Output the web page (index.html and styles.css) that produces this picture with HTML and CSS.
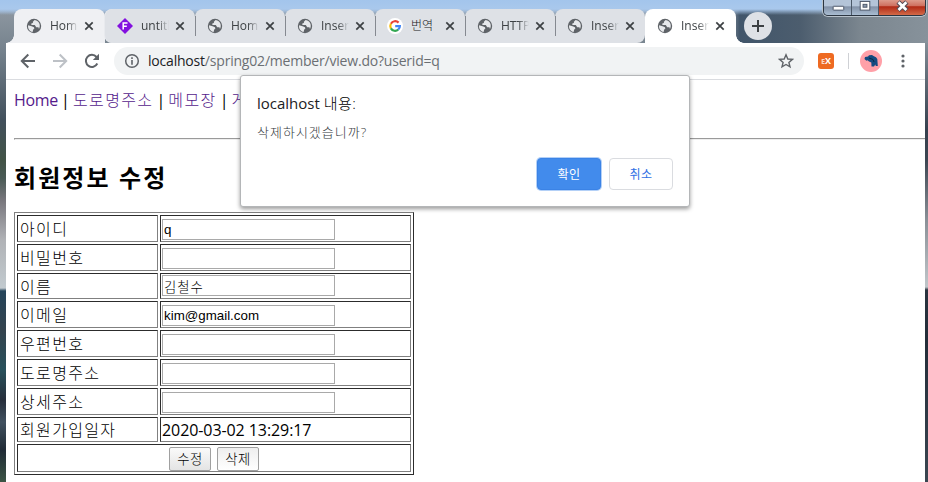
FILE: index.html
```html
<!DOCTYPE html>
<html lang="ko">
<head>
<meta charset="utf-8">
<title>회원정보 수정</title>
<link rel="stylesheet" href="styles.css">
</head>
<body>
<svg width="0" height="0" class="defs">
  <symbol id="globe" viewBox="0 0 16 16">
    <circle cx="8" cy="8" r="7.2" fill="#5f6368"/>
    <path d="M2.100 7.200 5.600 8.200 8 9.300 8.300 10.700 7.200 11.600 6.600 13.900C3.600 13.500 1.600 10.800 2.100 7.200ZM8.600 2.100 6.900 3.700 6.900 4.900 5.300 5.600 5.400 7 8.800 7.100 10.200 9.200 12.400 9.300 13 11C14.900 7.500 13.500 2.800 8.600 2.100Z" fill="#e6e8eb"/>
  </symbol>
  <symbol id="close" viewBox="0 0 10 10"><path d="M1.300 1.300 8.700 8.700M8.700 1.300 1.300 8.700" stroke="#3c4043" stroke-width="1.700"/></symbol>
</svg>
<div class="desktop">
  <header class="tabs">
    <div class="tab hover"><svg class="fav"><use href="#globe"/></svg><span>Home</span><svg class="x"><use href="#close"/></svg></div>
    <div class="tab after"><svg class="fav" viewBox="0 0 16 16"><path d="M8 0 16 8 8 16 0 8Z" fill="#8310df"/><path d="M6.200 11.500V5H10.500M6.200 8.200H9.800" fill="none" stroke="#fff" stroke-width="1.500"/></svg><span>untitled</span><svg class="x"><use href="#close"/></svg></div>
    <div class="tab sep"><svg class="fav"><use href="#globe"/></svg><span>Home</span><svg class="x"><use href="#close"/></svg></div>
    <div class="tab sep"><svg class="fav"><use href="#globe"/></svg><span>Insert</span><svg class="x"><use href="#close"/></svg></div>
    <div class="tab sep"><svg class="fav" viewBox="0 0 16 16"><circle cx="8" cy="8" r="8" fill="#fff"/><g fill="none" stroke-width="2.200"><path d="M3.900 5.700A4.900 4.900 0 0 1 11.600 4.600" stroke="#ea4335"/><path d="M3.900 5.700A4.900 4.900 0 0 0 3.900 10.500" stroke="#fbbc05"/><path d="M3.900 10.400A4.900 4.900 0 0 0 11.200 11.700" stroke="#34a853"/><path d="M11.200 11.700A4.600 4.600 0 0 0 12.900 8.100H8.200" stroke="#4285f4"/></g></svg><span class="ko">번역</span><svg class="x"><use href="#close"/></svg></div>
    <div class="tab sep"><svg class="fav"><use href="#globe"/></svg><span>HTTP</span><svg class="x"><use href="#close"/></svg></div>
    <div class="tab sep last"><svg class="fav"><use href="#globe"/></svg><span>Insert</span><svg class="x"><use href="#close"/></svg></div>
    <div class="tab active"><svg class="fav"><use href="#globe"/></svg><span>Insert</span><svg class="x"><use href="#close"/></svg></div>
    <div class="newtab"><svg viewBox="0 0 28 28"><path d="M14 8V20M8 14H20" stroke="#3c4043" stroke-width="2"/></svg></div>
    <div class="controls">
      <i><svg viewBox="0 0 28 15"><rect x="9.500" y="6.500" width="11" height="4" rx=".5" fill="#fff" stroke="#4c5668"/></svg></i>
      <i><svg viewBox="0 0 27 15"><rect x="8.500" y="1.500" width="10" height="9" fill="#fff" stroke="#4c5668"/><rect x="11.500" y="4.500" width="4" height="3" fill="#8c9bb0" stroke="#4c5668"/></svg></i>
      <i class="red"><svg viewBox="0 0 47 15"><path d="M19.500 2 28.500 10.500M28.500 2 19.500 10.500" stroke="#544b55" stroke-width="5"/><path d="M20 2.300 28 10.200M28 2.300 20 10.200" stroke="#fff" stroke-width="2.800"/></svg></i>
    </div>
  </header>
  <div class="window">
    <div class="toolbar">
      <svg class="ic" viewBox="0 0 16 16"><path d="M15 8H2.500M8.300 1.500 1.800 8l6.500 6.500" fill="none" stroke="#5f6368" stroke-width="2"/></svg>
      <svg class="ic" viewBox="0 0 16 16"><path d="M1 8H13.500M7.700 1.500 14.200 8l-6.500 6.500" fill="none" stroke="#bdc1c6" stroke-width="2"/></svg>
      <svg class="ic" viewBox="0 0 16 16"><path d="M13.300 10.500A6 6 0 1 1 12.500 4L14 5.500" fill="none" stroke="#5f6368" stroke-width="2"/><path d="M15 .8V7H8.800Z" fill="#5f6368"/></svg>
      <div class="omnibox">
        <svg class="info" viewBox="0 0 16 16"><circle cx="8" cy="8" r="6.300" fill="none" stroke="#5f6368" stroke-width="1.500"/><path d="M8 4.300V5.900M8 7.100V11.700" stroke="#5f6368" stroke-width="1.600"/></svg>
        <span class="url"><b>localhost</b>/spring02/member/view.do?userid=q</span>
        <svg class="star" viewBox="0 0 16 16"><path d="M8 1.800 9.800 6 14.400 6.400 10.900 9.400 12 13.900 8 11.500 4 13.900 5.100 9.400 1.600 6.400 6.200 6Z" fill="none" stroke="#5f6368" stroke-width="1.400"/></svg>
      </div>
      <div class="ext"><small>E</small>X</div>
      <div class="bar"></div>
      <svg class="avatar" viewBox="0 0 22 22"><circle cx="11" cy="11" r="11" fill="#ffa0a8"/><path d="M4.500 9 5 7 8 6.500 9 5.200 12 5 13.500 6 16 7.200 17.300 9 17.800 16H15.800L15.300 14.500 14 16.500H11.500L11.300 12.500 9 11.500 7.500 10.300 6.500 10.800 5.500 10Z" fill="#134a80"/><path d="M9 8 13 9.500 14 12" fill="none" stroke="#082846"/></svg>
      <svg class="dots" viewBox="0 0 4 14"><g fill="#5f6368"><circle cx="2" cy="2" r="1.600"/><circle cx="2" cy="7" r="1.600"/><circle cx="2" cy="12" r="1.600"/></g></svg>
    </div>
    <main>
      <nav><a>Home</a><s>|</s><a class="k">도로명주소</a><s>|</s><a class="k">메모장</a><s>|</s><a class="k">게</a></nav>
      <hr>
      <h2>회원정보 수정</h2>
      <table>
        <colgroup><col class="c1"><col class="c2"></colgroup>
        <tr class="r27"><td>아이디</td><td><input value="q"></td></tr>
        <tr class="r27"><td>비밀번호</td><td><input type="password"></td></tr>
        <tr class="r26"><td>이름</td><td><input class="kin" value="김철수"></td></tr>
        <tr class="r27"><td>이메일</td><td><input value="kim@gmail.com"></td></tr>
        <tr class="r27"><td>우편번호</td><td><input></td></tr>
        <tr class="r27"><td>도로명주소</td><td><input></td></tr>
        <tr class="r27"><td>상세주소</td><td><input></td></tr>
        <tr class="r25"><td>회원가입일자</td><td class="date">2020-03-02 13:29:17</td></tr>
        <tr class="r28"><td colspan="2"><div class="btns"><button>수정</button><button class="del">삭제</button></div></td></tr>
      </table>
    </main>
  </div>
  <div class="dialog">
    <div class="title">localhost <span>내용:</span></div>
    <div class="msg">삭제하시겠습니까?</div>
    <div class="actions"><button class="ok">확인</button><button class="cancel">취소</button></div>
  </div>
</div>
</body>
</html>
```
FILE: styles.css
```css
* { box-sizing: border-box; }
body { margin: 0; font-family: "Open Sans", "Noto Sans CJK KR", sans-serif; }
svg { display: block; flex: none; }
.defs { position: absolute; }
.desktop {
  position: relative; width: 928px; height: 482px; overflow: hidden; padding: 9px 3px 0 6px;
  background:
    linear-gradient(180deg, #a3c5ec 0, #a9c8ec 9px, rgba(150,180,215,0) 15px) 0 0 / 850px 15px no-repeat,
    linear-gradient(90deg, transparent 730px, #41556a 740px, #4c5d6e 800px, #7b868f 860px, #87929b 928px) 0 0 / 928px 43px no-repeat,
    linear-gradient(180deg, #87929b 40px, #68737e 70px, #35404e 130px, #3c4652 160px, #8a9097 220px, #c0c6ca 287px, #2a3440 290px, #232d39 340px, #3a4651 482px) 925px 0 / 3px 482px no-repeat,
    linear-gradient(180deg, #a9c8ec 0, #8b959f 14px, #75828d 50px, #42505c 120px, #425346 160px, #4a5a55 178px, #77767c 200px, #b0b2b6 240px, #c2cacf 288px, #24445a 291px, #34434e 330px, #28505b 370px, #262e3b 400px, #40505f 422px, #202b36 450px, #3c5545 482px);
}
.tabs { display: flex; height: 34px; padding-left: 8px; }
.tab { display: flex; align-items: center; width: 90px; padding: 0 0 0 12px; background: #dee1e6; position: relative; border-radius: 8px 8px 0 0; }
.tab .fav { width: 16px; height: 16px; }
.tab span { width: 28px; margin: 0 6px 0 8px; overflow: hidden; white-space: nowrap; font-size: 12px; line-height: 18px; color: #3c4043; mask-image: linear-gradient(90deg, #000 60%, transparent 100%); }
.tab .ko { mask-image: none; font-size: 12px; font-weight: 300; color: #202124; }
.tab .x { width: 10px; height: 10px; }
.tab.hover { width: 91px; background: #eff0f3; }
.tab.hover::before, .tab.active::after { content: ""; position: absolute; bottom: 0; width: 8px; height: 8px; }
.tab.hover::before { left: -8px; background: radial-gradient(circle at 0 0, transparent 7.500px, #eff0f3 8px); }
.tab.active::after { right: -8px; background: radial-gradient(circle at 100% 0, transparent 7.500px, #fff 8px); }
.tab.after { border-radius: 8px 8px 0 8px; box-shadow: -1px 0 #e8eaee; }
.tab.sep::before { content: ""; position: absolute; left: 0; top: 7px; width: 1px; height: 20px; background: #858990; }
.tab.last { border-radius: 8px 8px 8px 0; }
.tab.active { width: 91px; background: #fff; }
.newtab { width: 28px; height: 28px; margin: 3px 0 0 8px; border-radius: 50%; background: #dee1e6; }
.controls { position: absolute; right: 2px; top: 0; display: flex; width: 103px; height: 16px; border: solid #2b3541; border-width: 0 1px 1px; border-radius: 0 0 5px 5px; overflow: hidden; box-shadow: 0 0 0 1px #b9c3cc; }
.controls i { width: 28px; height: 15px; background: linear-gradient(#b4c4d8 0 40%, #8291a7 45%, #a9bdd2); border-right: 1px solid #4b5868; }
.controls i:nth-child(2) { width: 27px; }
.controls .red { width: 46px; border: 0; background: linear-gradient(#dd9b8c 0, #cf7160 38%, #b12a16 45%, #d36a48); }
.window { height: 439px; background: #fff; }
.toolbar { display: flex; align-items: center; height: 37px; padding-left: 14px; border-bottom: 1px solid #dadce0; }
.ic { width: 16px; height: 16px; margin-right: 16px; }
.omnibox { display: flex; align-items: center; width: 690px; height: 28px; margin-left: -2px; padding: 0 10px; border-radius: 14px; background: #f1f3f4; }
.info { width: 16px; height: 16px; }
.url { flex: 1; margin-left: 8px; font-size: 14px; line-height: 20px; letter-spacing: -.2px; color: #6b6f73; white-space: nowrap; }
.url b { font-weight: 400; color: #202124; }
.star { width: 16px; height: 16px; }
.ext { width: 16px; height: 16px; margin-left: 14px; border-radius: 3px; background: #ee6a22; color: #fff; font: bold 9px/16px "Open Sans", sans-serif; text-align: center; }
.ext small { font-size: 7px; opacity: .75; }
.bar { width: 1px; height: 16px; margin-left: 14px; background: #cfd1d5; }
.avatar { width: 22px; height: 22px; margin-left: 11px; }
.dots { width: 4px; height: 14px; margin-left: 19px; }
main { padding: 0 0 0 8px; }
nav { display: flex; height: 40px; padding-top: 8px; font-size: 16px; line-height: 24px; color: #551a8b; }
nav a:first-child { width: 44px; letter-spacing: -.3px; }
nav s { width: 15px; text-align: center; text-decoration: none; color: #000; }
nav .k { letter-spacing: 1.350px; font-weight: 300; }
hr { margin: 18px 0 0; border-right: 0; }
h2 { margin: 21px 0 0; height: 51px; font-size: 24px; line-height: 34px; letter-spacing: 2.100px; }
table { width: 400px; table-layout: fixed; border: 1px solid; border-color: #808080 #2c2c2c #2c2c2c #808080; border-spacing: 2px; font-size: 16px; }
.c1 { width: 141px; } .c2 { width: 251px; }
td { padding: 0 1px; border: 1px solid; border-color: #2c2c2c #808080 #808080 #2c2c2c; line-height: 22px; font-weight: 300; letter-spacing: 1.350px; vertical-align: middle; white-space: nowrap; }
td:first-child:not([colspan]) { padding: 1px 0 0 2px; }
.r27 { height: 27px; } .r26 { height: 26px; } .r25 { height: 25px; } .r28 { height: 28px; }
input { display: block; width: 173px; height: 21px; margin: 2px 0 0; padding: 1px; border: 1px solid #a9a9a9; background: #fff; font: 13.333px "Liberation Sans", "Noto Sans CJK KR", sans-serif; letter-spacing: 0; color: #000; }
.r26 input { margin: 0 0 1px; padding-top: 3px; }
input.kin { letter-spacing: 1px; font-weight: 300; }
td.date { letter-spacing: -.08px; font-weight: 400; }
.btns { display: flex; justify-content: center; gap: 6px; height: 25px; padding-top: 1px; }
.btns button { width: 42px; height: 24px; padding: 1px 0 0; border: 1px solid #a0a0a0; border-radius: 2px; background: linear-gradient(#fafafa, #e4e4e4); color: #000; font: 300 13.333px/20px "Noto Sans CJK KR", sans-serif; letter-spacing: .5px; }
.btns .del { background: linear-gradient(#eee, #fff); }
.dialog { position: absolute; left: 240px; top: 75px; width: 450px; height: 132px; padding: 15px 16px 16px; border: 1px solid #b4b6b8; border-radius: 3px; background: #fff; box-shadow: 0 2px 4px rgba(0,0,0,.4); }
.title { height: 24px; font-size: 15px; line-height: 24px; color: #202124; }
.title span { font-weight: 300; letter-spacing: .5px; color: #000; }
.msg { margin-top: 7px; font-size: 13px; font-weight: 300; line-height: 20px; letter-spacing: 1px; color: #34383c; }
.actions { display: flex; justify-content: flex-end; gap: 8px; margin-top: 16px; }
.actions button { width: 64px; height: 32px; padding: 0; border: 1px solid #dadce0; border-radius: 4px; background: #fff; color: #2f6fe4; font: 12px/20px "Noto Sans CJK KR", sans-serif; letter-spacing: .5px; }
.actions .ok { border-color: #3b83e6; background: #428bec; color: #fff; box-shadow: 0 0 0 1px #b3d0f7; }
```
